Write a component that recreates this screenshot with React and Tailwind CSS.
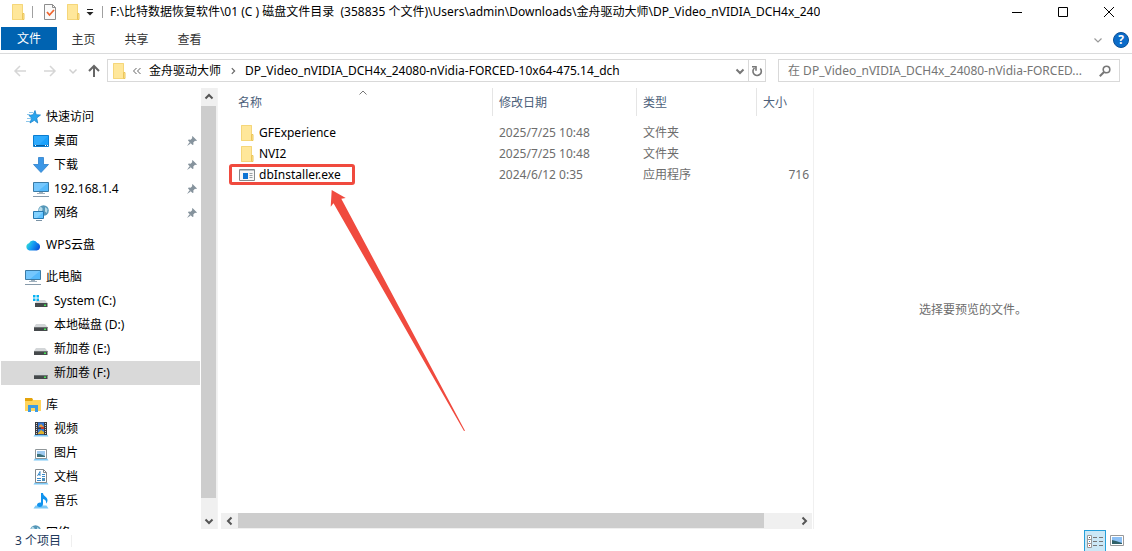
import { useState } from 'react';

const QUICK = [
  { id: 'desktop', label: '桌面', icon: DesktopIcon },
  { id: 'downloads', label: '下载', icon: DownloadIcon },
  { id: 'host', label: '192.168.1.4', icon: MonitorIcon },
  { id: 'network', label: '网络', icon: NetworkIcon },
];

const DRIVES = [
  { id: 'c', label: 'System (C:)', icon: SystemDriveIcon },
  { id: 'd', label: '本地磁盘 (D:)', icon: DriveIcon },
  { id: 'e', label: '新加卷 (E:)', icon: DriveIcon },
  { id: 'f', label: '新加卷 (F:)', icon: DriveIcon },
];

const LIBRARIES = [
  { id: 'videos', label: '视频', icon: VideoIcon },
  { id: 'pictures', label: '图片', icon: PictureIcon },
  { id: 'documents', label: '文档', icon: DocumentIcon },
  { id: 'music', label: '音乐', icon: MusicIcon },
];

const FILES = [
  { name: 'GFExperience', date: '2025/7/25 10:48', type: '文件夹', size: '', icon: FolderIcon },
  { name: 'NVI2', date: '2025/7/25 10:48', type: '文件夹', size: '', icon: FolderIcon },
  { name: 'dbInstaller.exe', date: '2024/6/12 0:35', type: '应用程序', size: '716', icon: ExeIcon, marked: true },
];

/* ---------- icons ---------- */

function Svg({ w = 16, h = 16, children }) {
  return (
    <svg width={w} height={h} viewBox={`0 0 ${w} ${h}`} className="shrink-0" aria-hidden="true">
      {children}
    </svg>
  );
}

function FolderIcon() {
  return (
    <Svg>
      <path d="M2 0h11v9h1v7H2z" fill="#ffe79a" />
      <path d="M2.500.5h10V10M2.500.5v15h10" fill="none" stroke="#f5d67a" />
      <path d="M12.500 9.500h1.500v6h-1.500z" fill="#ffe79a" stroke="#ecc65a" />
    </Svg>
  );
}

function PropertiesIcon() {
  return (
    <Svg>
      <path d="M2.500.5h8l3 3v12h-11z" fill="#fafafa" stroke="#8d8d8d" />
      <path d="M10.500.5v3h3" fill="none" stroke="#8d8d8d" />
      <path d="M5 8l2.500 3L12 6" fill="none" stroke="#f0652f" strokeWidth="1.800" />
    </Svg>
  );
}

function Chevron({ dir = 'down', color = '#666', size = 10, width = 1.5 }) {
  const d = {
    down: 'M1.500 3.500L5 7l3.500-3.500',
    up: 'M1.500 6.500L5 3l3.500 3.500',
    right: 'M3.500 1.500L7 5 3.500 8.500',
    left: 'M6.500 1.500L3 5l3.500 3.500',
  };
  return (
    <svg width={size} height={size} viewBox="0 0 10 10" className="shrink-0" aria-hidden="true">
      <path d={d[dir]} fill="none" stroke={color} strokeWidth={width} />
    </svg>
  );
}

function ArrowIcon({ dir, color }) {
  const d = {
    left: 'M14 8H3M8 3L3 8l5 5',
    right: 'M2 8h11M8 3l5 5-5 5',
    up: 'M8 14V3M3 8l5-5 5 5',
  };
  return <Svg><path d={d[dir]} fill="none" stroke={color} strokeWidth={dir === 'up' ? 2 : 1.5} /></Svg>;
}

function StarIcon() {
  return (
    <Svg>
      <path d="M10 1.500l1.200 4.200 4.300.3-3.800 3 1 5L9.300 11.300 5 14l1.700-4.800L4 6.500l4.200-.8z" fill="#29a5ee" stroke="#1783cd" strokeWidth=".8" />
      <path d="M4 3.500h4M2 5.500h3M2 9.500h4M1 12.500h4" stroke="#8cc6ea" />
    </Svg>
  );
}

function DesktopIcon() {
  return (
    <Svg>
      <path d="M.5 2.500h15v11H.5z" fill="#1ba1fb" stroke="#0b7dd0" />
      <path d="M1 3l14 0-9 9H1z" fill="#3db2ff" opacity=".6" />
      <path d="M1 12.500h14" stroke="#075e9f" />
      <path d="M2 12.500h1M12 12.500h1M14 12.500h1" stroke="#fff" />
    </Svg>
  );
}

function DownloadIcon() {
  return <Svg><path d="M5.500.5h5v7h5L8 15.500.5 7.500h5z" fill="#3c97e6" stroke="#2b7fcb" strokeWidth=".8" /></Svg>;
}

function MonitorIcon() {
  return (
    <Svg>
      <path d="M.5 1.500h15v9H.5z" fill="#55b9fb" stroke="#3b7ba6" />
      <path d="M1 2h14L5 10H1z" fill="#8bd0ff" opacity=".6" />
      <path d="M6 11.500h4M4 12.500h8" stroke="#9fb0bd" />
      <path d="M0 15.500h16" stroke="#879aaa" />
    </Svg>
  );
}

function NetworkIcon() {
  return (
    <Svg>
      <circle cx="10.500" cy="5.500" r="5.300" fill="#5597b8" />
      <path d="M7 2c2 0 3 1 2.500 3S7 7 5.500 5.500zM12 2l2.500 2-.5 4-2-1.500z" fill="#b7dbe9" />
      <path d="M.5 6.500h10v7H.5z" fill="#5fc2ff" stroke="#2678b0" />
      <path d="M1 7h9l-6 6H1z" fill="#9bdcff" opacity=".6" />
      <path d="M3 15.500h6" stroke="#7a92a5" />
    </Svg>
  );
}

function CloudIcon() {
  return (
    <Svg>
      <defs>
        <linearGradient id="cloud" x1="0" x2="1" y1=".3" y2=".7">
          <stop offset="0" stopColor="#34e0d3" />
          <stop offset=".45" stopColor="#159cf3" />
          <stop offset="1" stopColor="#0b4fd8" />
        </linearGradient>
      </defs>
      <path d="M4.500 13.500a3.700 3.700 0 0 1-.5-7.200 4.600 4.600 0 0 1 8.300-.2 3.800 3.800 0 0 1-.5 7.400z" fill="url(#cloud)" />
    </Svg>
  );
}

function DriveIcon() {
  return (
    <Svg>
      <path d="M3 7h9l2.500 3H1z" fill="#d3d6d8" />
      <path d="M1 10h13.500v4H1z" fill="#45494b" />
      <path d="M1 10.500h13.500" stroke="#6d7173" />
      <path d="M11 11.500h2V13h-2z" fill="#45e455" />
    </Svg>
  );
}

function SystemDriveIcon() {
  return (
    <Svg>
      <path d="M4 7h8l2.500 3H2z" fill="#d3d6d8" />
      <path d="M2 10h12.500v4H2z" fill="#45494b" />
      <path d="M11 11.500h2V13h-2z" fill="#45e455" />
      <path d="M0 2h2.500v2.500H0zM3.500 2h2.500v2.500H3.500zM0 5.500h2.500V8H0zM3.500 5.500h2.500V8H3.500z" fill="#08b3f3" />
    </Svg>
  );
}

function LibraryIcon() {
  return (
    <Svg>
      <path d="M0 1h7l1 2h8v11H0z" fill="#ffd45c" />
      <path d="M0 1h7l1 2-1 1H0z" fill="#e4a30b" />
      <path d="M3 8h10v7h-3v-4H6v4H3z" fill="#3c9be3" />
    </Svg>
  );
}

function Stand() {
  return <path d="M2.500 12.500h11l2 3H.5z" fill="#7bc8f6" />;
}

function VideoIcon() {
  return (
    <Svg>
      <Stand />
      <path d="M2 1h12v13H2z" fill="#3b3b3f" />
      <path d="M3.500 2v12M12.500 2v12" stroke="#d5d5d5" strokeDasharray="1 1" />
      <path d="M5 1.500h6v5H5zM5 8h6v5.500H5z" fill="#3479d8" />
      <path d="M6 5l2-2 3 3H6z" fill="#e6983a" />
      <path d="M5 12l3-3 3 2v2H5z" fill="#e0b22e" />
      <path d="M8 6h3v2H8z" fill="#c83c28" />
    </Svg>
  );
}

function PictureIcon() {
  return (
    <Svg>
      <Stand />
      <path d="M2.500 4.500h11v9h-11z" fill="#fff" stroke="#8f9699" />
      <path d="M4 6h8v6H4z" fill="#9fcaf0" />
      <path d="M4 9l3 0 5 2v1H4z" fill="#3d6f78" />
    </Svg>
  );
}

function DocumentIcon() {
  return (
    <Svg>
      <Stand />
      <path d="M2.500.5h8l3 3v10h-11z" fill="#fff" stroke="#84898c" />
      <path d="M10.500.5v3h3" fill="none" stroke="#84898c" />
      <path d="M4.500 7L7 2.500V7M5 5.500h2M9 5.500h3M9 7.500h3M4 9.500h4M4 11.500h4" fill="none" stroke="#398bcb" />
      <path d="M9 9h3v3H9z" fill="#4d91bd" />
    </Svg>
  );
}

function MusicIcon() {
  return (
    <Svg>
      <Stand />
      <path d="M8 0h2c0 3 4.500 4 4.500 7 0 1.500-.5 2.500-1.500 3.500.5-3-1-4-3-4.500V11c0 1.800-1.500 3-3.200 3S4 13.200 4 12c0-1.700 2-2.700 4-2.300z" fill="#1193ee" />
    </Svg>
  );
}

function ExeIcon() {
  return (
    <Svg>
      <path d="M.5 2.500h15v11H.5z" fill="#f7f7f7" stroke="#858a8d" />
      <path d="M1 3.500h14" stroke="#bfc3c5" />
      <path d="M4 6h5v6H4z" fill="#0d74d4" />
      <path d="M10.500 6.500h3M10.500 8.500h3M10.500 10.500h3" stroke="#9aa0a4" />
    </Svg>
  );
}

function PinIcon() {
  return (
    <Svg w={10} h={10}>
      <path d="M5.500 0L10 4.500l-1 .5-1-.2-1.700 1.700.2 2-1 .5L1 4.500 1.700 3.500l2 .2L5.300 2 5 1zM2.500 6.300l1.200 1.200L0 10z" fill="#86939d" />
    </Svg>
  );
}

/* ---------- sidebar ---------- */

function TreeRow({ item, level = 1, pinned, selected, onSelect }) {
  const Icon = item.icon;
  return (
    <a
      href={'#' + item.id}
      onClick={onSelect}
      className={'flex h-6 shrink-0 items-center gap-[5px] pr-[3px] ' + (level ? 'pl-8 ' : 'pl-6 ') + (selected ? 'bg-[#d9d9d9]' : '')}
    >
      <Icon />
      <span className="flex-1 whitespace-nowrap">{item.label}</span>
      {pinned && <PinIcon />}
    </a>
  );
}

function Sidebar() {
  const [current, setCurrent] = useState('f');
  const rows = (items, pinned) => items.map(it => (
    <TreeRow key={it.id} item={it} pinned={pinned} selected={current === it.id} onSelect={() => setCurrent(it.id)} />
  ));

  return (
    <aside className="flex w-[218px] shrink-0 gap-px border-r border-[#f3f3f3] pl-px">
      <nav className="flex min-w-0 flex-1 flex-col gap-2 overflow-hidden pt-[17px]">
        <div className="shrink-0">
          <TreeRow level={0} item={{ id: 'quick', label: '快速访问', icon: StarIcon }} />
          {rows(QUICK, true)}
        </div>
        <TreeRow level={0} item={{ id: 'wps', label: 'WPS云盘', icon: CloudIcon }} />
        <div className="shrink-0">
          <TreeRow level={0} item={{ id: 'pc', label: '此电脑', icon: MonitorIcon }} />
          {rows(DRIVES)}
        </div>
        <div className="shrink-0">
          <TreeRow level={0} item={{ id: 'lib', label: '库', icon: LibraryIcon }} />
          {rows(LIBRARIES)}
        </div>
        <TreeRow level={0} item={{ id: 'net', label: '网络', icon: NetworkIcon }} />
      </nav>
      <div className="flex w-4 flex-col bg-[#f0f0f0]">
        <button aria-label="向上滚动" className="flex h-[18px] items-center justify-center"><Chevron dir="up" color="#555" width={2} /></button>
        <div className="mr-px flex-1 bg-[#cdcdcd]" />
        <div className="h-[15px]" />
        <button aria-label="向下滚动" className="flex h-4 items-center justify-center"><Chevron color="#555" width={2} /></button>
      </div>
    </aside>
  );
}

/* ---------- file list ---------- */

function Mark() {
  return (
    <>
      <span className="pointer-events-none absolute -top-[3px] -left-[10px] h-[21px] w-[126px] rounded-[3px] border-3 border-[#f04a3e]" />
      <svg className="pointer-events-none absolute top-[22px] left-[90px]" width="138" height="244" viewBox="329 189 138 244" aria-hidden="true">
        <path d="M331.700 190L345.700 198L341.300 198.700L465 430.700L464 431L333.500 203.300L330.700 206.700z" fill="#f04a3e" />
      </svg>
    </>
  );
}

function FileList() {
  const th = 'h-7 border-r border-[#e5e5e5] pt-[2px] pl-[6px] text-left font-normal text-[#4c607a]';
  return (
    <main className="flex w-[595px] min-w-0 shrink flex-col pr-px pl-[2px]">
      <div className="relative flex-1">
        <div className="absolute top-0 left-0 flex w-[286px] justify-center"><Chevron dir="up" color="#777" width={1} /></div>
        <table className="w-full table-fixed border-separate border-spacing-0">
          <colgroup>
            <col className="w-[273px]" />
            <col className="w-36" />
            <col className="w-[120px]" />
            <col />
          </colgroup>
          <thead>
            <tr>
              <th className="h-7 border-r border-[#e5e5e5] pt-[2px] pl-[18px] text-left font-normal text-[#4c607a]">名称</th>
              <th className={th}>修改日期</th>
              <th className={th}>类型</th>
              <th className="h-7 pt-[2px] pl-[6px] text-left font-normal text-[#4c607a]">大小</th>
            </tr>
            <tr><td className="h-[6px]" /></tr>
          </thead>
          <tbody className="text-[#6d6d6d]">
            {FILES.map(f => (
              <tr key={f.name} className="h-[21px]">
                <td className="pl-[19px]">
                  <div className="relative flex items-center gap-1 text-black">
                    <f.icon />
                    <span>{f.name}</span>
                    {f.marked && <Mark />}
                  </div>
                </td>
                <td className="pl-[6px]">{f.date}</td>
                <td className="pl-[6px]">{f.type}</td>
                <td className="pr-[3px] text-right">{f.size}</td>
              </tr>
            ))}
          </tbody>
        </table>
      </div>
      <div className="ml-px flex h-4 bg-[#f0f0f0]">
        <button aria-label="向左滚动" className="flex w-[17px] items-center justify-center"><Chevron dir="left" color="#555" width={2} /></button>
        <div className="mb-px flex-1 bg-[#cdcdcd]" />
        <div className="w-8" />
        <button aria-label="向右滚动" className="flex w-4 items-center justify-center"><Chevron dir="right" color="#555" width={2} /></button>
      </div>
    </main>
  );
}

/* ---------- window chrome ---------- */

function TitleBar() {
  return (
    <header className="flex h-[27px] items-start pl-[10px]">
      <div className="flex h-[23px] min-w-0 flex-1 items-center">
        <FolderIcon />
        <span className="ml-[6px] h-3 w-px bg-[#a0a0a0]" />
        <button aria-label="属性" className="ml-[9px]"><PropertiesIcon /></button>
        <button aria-label="新建文件夹" className="ml-[7px]"><FolderIcon /></button>
        <button aria-label="自定义快速访问工具栏" className="ml-1">
          <Svg w={10} h={10}><path d="M2 2.500h6" stroke="#222" /><path d="M1.500 5h7L5 8.500z" fill="#222" /></Svg>
        </button>
        <span className="ml-[7px] h-3 w-px bg-[#a0a0a0]" />
        <h1 className="ml-[7px] truncate whitespace-pre">F:\比特数据恢复软件\01 (C ) 磁盘文件目录  (358835 个文件)\Users\admin\Downloads\金舟驱动大师\DP_Video_nVIDIA_DCH4x_240</h1>
      </div>
      <div className="flex h-[23px]">
        <button aria-label="最小化" className="flex w-[46px] items-center justify-center"><Svg w={12} h={12}><path d="M1 6.500h10" stroke="#000" /></Svg></button>
        <button aria-label="最大化" className="flex w-[46px] items-center justify-center"><Svg w={12} h={12}><path d="M1.500 1.500h9v9h-9z" fill="none" stroke="#000" /></Svg></button>
        <button aria-label="关闭" className="flex w-[46px] items-center justify-center"><Svg w={12} h={12}><path d="M1 1l10 10M11 1L1 11" stroke="#000" /></Svg></button>
      </div>
    </header>
  );
}

function Ribbon() {
  return (
    <div className="flex h-[27px] items-start border-b border-[#dadbdc] pl-px">
      <button className="h-[23px] w-14 bg-[#0063b1] text-white">文件</button>
      {['主页', '共享', '查看'].map(t => (
        <button key={t} className="h-[25px] w-[53px] text-[#333]">{t}</button>
      ))}
      <div className="ml-auto flex h-[26px] items-center gap-[10px] pr-[3px]">
        <button aria-label="展开功能区"><Chevron color="#999" width={1.2} /></button>
        <button aria-label="帮助" className="flex size-4 items-center justify-center rounded-full border border-[#0a4f96] bg-[#0b6cc9] text-[12px] leading-3 font-bold text-white">?</button>
      </div>
    </div>
  );
}

function AddressRow() {
  return (
    <div className="flex h-[34px] items-center px-3 pb-px">
      <button aria-label="后退"><ArrowIcon dir="left" color="#d6d6d6" /></button>
      <button aria-label="前进" className="ml-[14px]"><ArrowIcon dir="right" color="#d6d6d6" /></button>
      <button aria-label="最近位置" className="ml-[10px]"><Chevron color="#d0d0d0" /></button>
      <button aria-label="向上" className="ml-2"><ArrowIcon dir="up" color="#666" /></button>
      <div className="ml-[5px] flex h-[23px] min-w-0 flex-1 items-center border border-[#d9d9d9] pl-[3px]">
        <FolderIcon />
        <span className="ml-[5px] flex w-[10px]"><Svg w={10} h={10}><path d="M4.500 2l-3 3 3 3M8.500 2l-3 3 3 3" fill="none" stroke="#666" /></Svg></span>
        <button className="ml-[7px] whitespace-nowrap">金舟驱动大师</button>
        <span className="mx-2"><Chevron dir="right" color="#666" size={8} /></span>
        <button className="truncate">DP_Video_nVIDIA_DCH4x_24080-nVidia-FORCED-10x64-475.14_dch</button>
        <button aria-label="历史记录" className="ml-auto px-[3px]"><Chevron color="#777" width={2} /></button>
        <button aria-label="刷新" className="flex h-full w-[17px] shrink-0 items-center justify-center border-l border-[#d9d9d9]">
          <Svg w={12} h={12}>
            <path d="M9.300 3.500A4.200 4.200 0 1 1 3.500 3" fill="none" stroke="#777" strokeWidth="1.600" />
            <path d="M1 1.700h4v4" fill="none" stroke="#777" strokeWidth="1.600" />
          </Svg>
        </button>
      </div>
      <label className="ml-3 flex h-[23px] w-[342px] shrink-0 items-center border border-[#d9d9d9] pr-2 pl-[9px]">
        <input
          aria-label="搜索"
          placeholder="在 DP_Video_nVIDIA_DCH4x_24080-nVidia-FORCED..."
          className="min-w-0 flex-1 outline-none placeholder:text-[#757575]"
        />
        <Svg w={12} h={12}>
          <circle cx="7.500" cy="4.500" r="3.300" fill="none" stroke="#777" strokeWidth="1.600" />
          <path d="M5 7L.8 11.200" stroke="#777" strokeWidth="2" />
        </Svg>
      </label>
    </div>
  );
}

function StatusBar() {
  return (
    <footer className="flex h-[21px] items-center pl-[15px] text-[#1e395b]">
      <span>3 个项目</span>
      <span className="ml-[10px] h-3 w-px bg-[#efefef]" />
      <div className="ml-auto flex h-full pr-1">
        <button aria-label="详细信息" className="flex h-full w-[22px] items-center justify-center border border-b-0 border-[#26a0da] bg-[#cbe8f6]">
          <Svg>
            <path d="M.5 2.500h4v12h-4zM.5 6.500h4M.5 10.500h4" fill="#fff" stroke="#999" />
            <path d="M6 4.500h4M6 8.500h4M6 12.500h4M12 4.500h4M12 8.500h4M12 12.500h4" stroke="#777" />
            <path d="M2 4h1v1H2z" fill="#555" />
            <path d="M2 8h1v1H2z" fill="#3a8fd0" />
            <path d="M2 12h1v1H2z" fill="#c33" />
          </Svg>
        </button>
        <button aria-label="大缩略图" className="flex h-full w-[22px] items-center justify-center">
          <Svg>
            <path d="M1.500 2.500h13v10h-13z" fill="#fff" stroke="#999" />
            <path d="M3 4h10v7H3z" fill="#8cc0f5" />
            <path d="M3 7l4 1 6 2v1H3z" fill="#2f6169" />
          </Svg>
        </button>
      </div>
    </footer>
  );
}

export default function App() {
  return (
    <div className="flex h-screen flex-col overflow-hidden bg-white font-['Noto_Sans','Noto_Sans_CJK_SC',sans-serif] text-[12px] leading-4 text-black">
      <TitleBar />
      <Ribbon />
      <AddressRow />
      <div className="flex min-h-0 flex-1 pb-px">
        <Sidebar />
        <FileList />
        <section className="flex min-w-0 flex-1 items-center justify-center border-l border-[#f0f0f0] pt-[2px] text-[#6d6d6d]">选择要预览的文件。</section>
      </div>
      <StatusBar />
    </div>
  );
}
